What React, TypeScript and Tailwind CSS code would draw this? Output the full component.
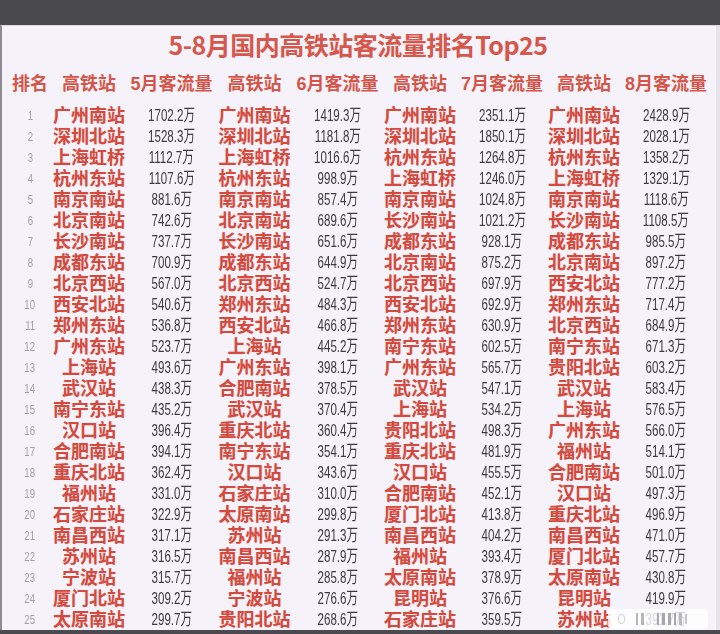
import React from "react";

type Row = [string, string, string, string, string, string, string, string];

const rows: Row[] = [
  ["广州南站", "1702.2万", "广州南站", "1419.3万", "广州南站", "2351.1万", "广州南站", "2428.9万"],
  ["深圳北站", "1528.3万", "深圳北站", "1181.8万", "深圳北站", "1850.1万", "深圳北站", "2028.1万"],
  ["上海虹桥", "1112.7万", "上海虹桥", "1016.6万", "杭州东站", "1264.8万", "杭州东站", "1358.2万"],
  ["杭州东站", "1107.6万", "杭州东站", "998.9万", "上海虹桥", "1246.0万", "上海虹桥", "1329.1万"],
  ["南京南站", "881.6万", "南京南站", "857.4万", "南京南站", "1024.8万", "南京南站", "1118.6万"],
  ["北京南站", "742.6万", "北京南站", "689.6万", "长沙南站", "1021.2万", "长沙南站", "1108.5万"],
  ["长沙南站", "737.7万", "长沙南站", "651.6万", "成都东站", "928.1万", "成都东站", "985.5万"],
  ["成都东站", "700.9万", "成都东站", "644.9万", "北京南站", "875.2万", "北京南站", "897.2万"],
  ["北京西站", "567.0万", "北京西站", "524.7万", "北京西站", "697.9万", "西安北站", "777.2万"],
  ["西安北站", "540.6万", "郑州东站", "484.3万", "西安北站", "692.9万", "郑州东站", "717.4万"],
  ["郑州东站", "536.8万", "西安北站", "466.8万", "郑州东站", "630.9万", "北京西站", "684.9万"],
  ["广州东站", "523.7万", "上海站", "445.2万", "南宁东站", "602.5万", "南宁东站", "671.3万"],
  ["上海站", "493.6万", "广州东站", "398.1万", "广州东站", "565.7万", "贵阳北站", "603.2万"],
  ["武汉站", "438.3万", "合肥南站", "378.5万", "武汉站", "547.1万", "武汉站", "583.4万"],
  ["南宁东站", "435.2万", "武汉站", "370.4万", "上海站", "534.2万", "上海站", "576.5万"],
  ["汉口站", "396.4万", "重庆北站", "360.4万", "贵阳北站", "498.3万", "广州东站", "566.0万"],
  ["合肥南站", "394.1万", "南宁东站", "354.1万", "重庆北站", "481.9万", "福州站", "514.1万"],
  ["重庆北站", "362.4万", "汉口站", "343.6万", "汉口站", "455.5万", "合肥南站", "501.0万"],
  ["福州站", "331.0万", "石家庄站", "310.0万", "合肥南站", "452.1万", "汉口站", "497.3万"],
  ["石家庄站", "322.9万", "太原南站", "299.8万", "厦门北站", "413.8万", "重庆北站", "496.9万"],
  ["南昌西站", "317.1万", "苏州站", "291.3万", "南昌西站", "404.2万", "南昌西站", "471.0万"],
  ["苏州站", "316.5万", "南昌西站", "287.9万", "福州站", "393.4万", "厦门北站", "457.7万"],
  ["宁波站", "315.7万", "福州站", "285.8万", "太原南站", "378.9万", "太原南站", "430.8万"],
  ["厦门北站", "309.2万", "宁波站", "276.6万", "昆明站", "376.6万", "昆明站", "419.9万"],
  ["太原南站", "299.7万", "贵阳北站", "268.6万", "石家庄站", "359.5万", "苏州站", "391.7万"],
];

const headers = ["排名", "高铁站", "5月客流量", "高铁站", "6月客流量", "高铁站", "7月客流量", "高铁站", "8月客流量"];

const grid = "grid grid-cols-[36px_82px_83px_83px_83px_82px_82px_82px_82px]";

export default function App() {
  return (
    <div className="w-[720px] h-[634px] bg-[#4b4a4f] flex flex-col overflow-hidden font-['Liberation_Sans','Noto_Sans_CJK_SC',sans-serif]">
      <div className="h-[25px] shrink-0" />
      <div className="relative flex-1 bg-[#f5f2f9] border-l-2 border-l-[#8d8b90] border-r-[4px] border-r-[#e6e3ea] border-t border-t-[#dcd9df] mb-[5px] pl-[10px]">
        <div className="h-[36px] flex items-center justify-center pr-[12px]">
          <h1 className="text-[25px] font-bold text-[#d6574b] leading-none tracking-[-0.5px] font-['Noto_Sans_CJK_SC',sans-serif]">
            5-8月国内高铁站客流量排名Top25
          </h1>
        </div>

        <div className={`${grid} h-[43px] items-center`}>
          {headers.map((h, i) => (
            <div key={i} className="text-center whitespace-nowrap text-[18px] font-bold text-[#d4564a] leading-none">
              {h}
            </div>
          ))}
        </div>

        <div className="flex flex-col">
          {rows.map((r, i) => (
            <div key={i} className={`${grid} h-[21px] items-center`}>
              <div className="text-center text-[12px] text-[#a3a1a6] leading-none">
                <span className="inline-block scale-x-[0.8]">{i + 1}</span>
              </div>
              {r.map((cell, j) =>
                j % 2 === 0 ? (
                  <div key={j} className="flex justify-center whitespace-nowrap text-[18px] font-bold text-[#d34a40] leading-none [text-shadow:0_0_1px_#f3c7c1]">
                    {cell}
                  </div>
                ) : (
                  <div key={j} className="flex justify-center whitespace-nowrap text-[17px] text-[#3c3b40] leading-none">
                    <span className="inline-block scale-x-[0.68]">{cell}</span>
                  </div>
                )
              )}
            </div>
          ))}
        </div>

        {/* watermark */}
        <div className="absolute left-[606px] top-[583px] w-[100px] h-[20px] bg-white/80 rounded-sm flex items-center gap-[3px] pl-[10px] blur-[0.4px]">
          <div className="w-[7px] h-[10px] rounded-full border border-[#cfcfd2] mr-[8px]" />
          <div className="w-[2px] h-[12px] bg-[#b8b8bc]" />
          <div className="w-[3px] h-[12px] bg-[#b8b8bc] mr-[10px]" />
          <div className="w-[2px] h-[12px] bg-[#a8a8ac]" />
          <div className="w-[3px] h-[12px] bg-[#a8a8ac]" />
          <div className="w-[3px] h-[12px] bg-[#a8a8ac]" />
          <div className="w-[2px] h-[12px] bg-[#a8a8ac]" />
          <div className="w-[3px] h-[12px] bg-[#b8b8bc]" />
          <div className="w-[2px] h-[10px] bg-[#c8c8cc]" />
        </div>
      </div>
    </div>
  );
}
